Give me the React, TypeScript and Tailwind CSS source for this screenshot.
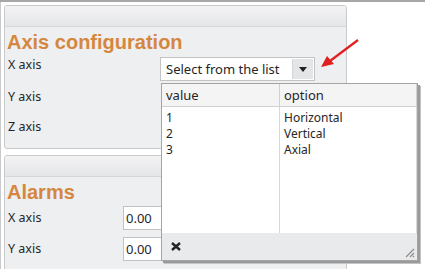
import React from "react";

const font = { fontFamily: "'Noto Sans', 'DejaVu Sans', sans-serif" };
const titleFont = { fontFamily: "'Liberation Sans', Arial, sans-serif" };

function Panel({ title, children, className }: { title: string; children: React.ReactNode; className?: string }) {
  return (
    <div className={"shrink-0 w-[343px] rounded-[3px] border border-[#c9cacc] bg-[#eeeff1] overflow-hidden " + (className ?? "")}>
      <div className="h-[21px] border-b border-[#d6d7d9] bg-gradient-to-b from-[#f3f3f4] to-[#e5e6e8]" />
      <div className="pl-[2px] pt-[3px] text-[20px] font-bold leading-[24px] text-[#d5873f]" style={titleFont}>{title}</div>
      {children}
    </div>
  );
}

export default function App() {
  return (
    <div className="relative w-[425px] h-[269px] overflow-hidden bg-white text-[#262626]" style={font}>
      <div className="h-[2px] bg-[#a7a7a7]" />
      <div className="flex h-[267px]">
        <div className="w-[1px] bg-[#c9c9c9]" />
        <div className="flex flex-col pl-[3px] pt-[3px] gap-[6px] bg-white">
          <Panel title="Axis configuration" className="h-[144px]">
            <div className="flex flex-col text-[12.5px] pl-[3px]">
              <div className="flex items-start h-[28px]">
                <span className="w-[152px] mt-[3px] leading-[16px]">X axis</span>
                <div className="mt-[3px] flex h-[24px] w-[155px] border border-[#c2c3c5] bg-white">
                  <div className="flex-1 pl-[5px] leading-[22px] text-[13px]">Select from the list</div>
                  <div className="w-[21px] m-[1px] flex items-center justify-center bg-[#e4e5e7] border-l border-[#d4d5d7]">
                    <svg width="8" height="5" viewBox="0 0 8 5"><path d="M0 0h8L4 5z" fill="#222" /></svg>
                  </div>
                </div>
              </div>
              <div className="h-[30px] flex items-center">Y axis</div>
              <div className="h-[30px] flex items-center">Z axis</div>
            </div>
          </Panel>
          <Panel title="Alarms" className="h-[130px]">
            <div className="flex flex-col text-[12.5px] pl-[3px] pt-[2px] gap-[7px]">
              <div className="flex items-center h-[24px]">
                <span className="w-[115px]">X axis</span>
                <div className="h-[24px] w-[153px] border border-[#c2c3c5] bg-white pl-[2px] text-[13px] leading-[22px]">0.00</div>
              </div>
              <div className="flex items-center h-[24px]">
                <span className="w-[115px]">Y axis</span>
                <div className="h-[24px] w-[153px] border border-[#c2c3c5] bg-white pl-[2px] text-[13px] leading-[22px]">0.00</div>
              </div>
            </div>
          </Panel>
        </div>
      </div>

      {/* dropdown popup */}
      <div className="absolute left-[161px] top-[83px] w-[257px] h-[178px] flex flex-col border border-[#a4a4a4] bg-white shadow-[2px_2px_0_#9a9a9a,3px_3px_0_#c4c4c4] text-[12px]">
        <div className="flex h-[23px] border-b border-[#d0d0d0] bg-[#f4f4f5] text-[13px]">
          <div className="w-[118px] pl-[4px] leading-[22px] border-r border-[#d0d0d0]">value</div>
          <div className="flex-1 pl-[4px] leading-[22px] border-r border-[#d0d0d0]">option</div>
        </div>
        <div className="flex flex-1">
          <div className="w-[118px] pl-[4px] pt-[3px] border-r border-[#d8d8d8] leading-[16px]">
            <div>1</div>
            <div>2</div>
            <div>3</div>
          </div>
          <div className="flex-1 pl-[4px] pt-[3px] leading-[16px] border-r border-[#d8d8d8]">
            <div>Horizontal</div>
            <div>Vertical</div>
            <div>Axial</div>
          </div>
        </div>
        <div className="relative h-[27px] bg-[#e9eaec] flex items-center pl-[9px]">
          <svg width="10" height="9" viewBox="0 0 10 9"><path d="M1 1l8 7M9 1L1 8" stroke="#222" strokeWidth="2.4" /></svg>
          <svg className="absolute right-[2px] bottom-[2px]" width="12" height="12" viewBox="0 0 12 12">
            <path d="M11 3L3 11M11 7L7 11M11 10L10 11" stroke="#8c8c8c" strokeWidth="1.2" />
          </svg>
        </div>
      </div>

      {/* red arrow */}
      <svg className="absolute left-[318px] top-[36px]" width="44" height="36" viewBox="0 0 44 36">
        <path d="M40 4L12 25" stroke="#e02020" strokeWidth="2.2" />
        <path d="M3 31L9 20L16 28z" fill="#e02020" />
      </svg>
    </div>
  );
}
